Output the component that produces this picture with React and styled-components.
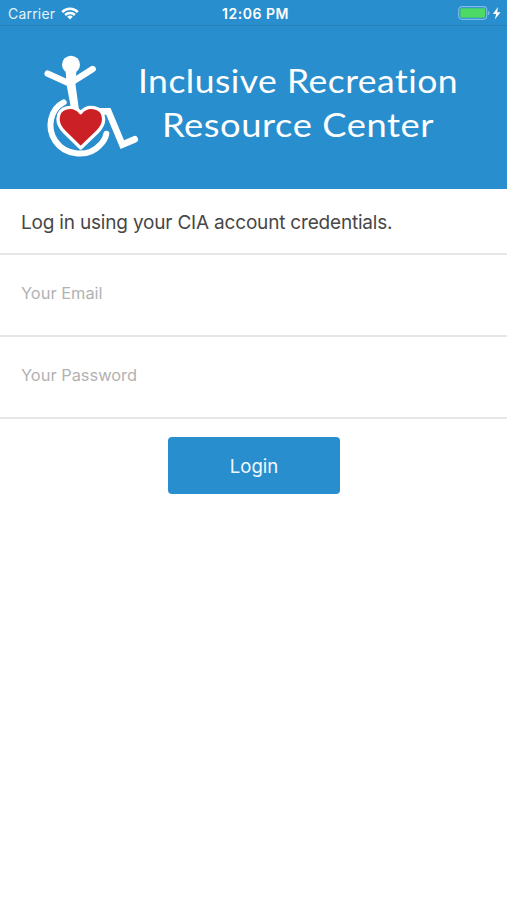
import styled, { createGlobalStyle } from "styled-components";

const GlobalStyle = createGlobalStyle`
  * {
    box-sizing: border-box;
  }

  body {
    margin: 0;
    background-color: #fff;
    font-family: Inter, "Liberation Sans", sans-serif;
  }
`;

const Screen = styled.main`
  min-height: 900px;
  background-color: #fff;
`;

const StatusBar = styled.div`
  display: grid;
  grid-template-columns: 1fr auto 1fr;
  align-items: center;
  height: 26px;
  padding: 1px 5px 0 8px;
  background-color: #298ecd;
  border-bottom: 1px solid #2580ba;
  color: #fff;
  line-height: 24px;
`;

const Carrier = styled.div`
  display: flex;
  align-items: center;
  gap: 6px;
  padding-top: 1px;
  color: #e3f3fc;
  font-size: 14px;
  letter-spacing: 0.2px;

  svg {
    margin-bottom: 1px;
  }
`;

const Time = styled.div`
  padding: 1px 0 0 1px;
  font-size: 14px;
  font-weight: 600;
  letter-spacing: 0.5px;
`;

const Power = styled.div`
  display: flex;
  justify-content: flex-end;
  padding-bottom: 1px;
`;

const Header = styled.header`
  display: flex;
  align-items: flex-start;
  height: 163px;
  padding: 19px 0 0 30px;
  background-color: #298ecd;
`;

const Title = styled.h1`
  width: 336px;
  margin: 13px 0 0 -20px;
  color: #fff;
  font-family: Lato, "Open Sans", sans-serif;
  font-size: 33.5px;
  font-weight: 400;
  line-height: 44px;
  text-align: center;
`;

const TitleLine = styled.span`
  display: block;
  white-space: nowrap;
  letter-spacing: ${(props) => props.$spacing};
  transform: scaleX(${(props) => props.$stretch});
`;

const Intro = styled.p`
  height: 66px;
  margin: 0;
  padding: 1px 21px 0;
  border-bottom: 2px solid #e6e6e6;
  color: #474747;
  font-size: 19px;
  line-height: 66px;
  letter-spacing: -0.19px;
`;

const Input = styled.input`
  display: block;
  width: 100%;
  height: 82px;
  padding: 0 21px 5px;
  border: none;
  border-bottom: 2px solid #e6e6e6;
  border-radius: 0;
  outline: none;
  background-color: #fff;
  color: #474747;
  font-family: inherit;
  font-size: 16.4px;

  &::placeholder {
    color: #b2b2b2;
    opacity: 1;
  }
`;

const Button = styled.button`
  display: block;
  width: 172px;
  height: 57px;
  margin: 18px auto 0 168px;
  padding: 0;
  border: none;
  border-radius: 4px;
  background-color: #298ecd;
  color: #f0f9fe;
  font-family: inherit;
  font-size: 18.6px;
`;

function WifiIcon() {
  return (
    <svg width="18" height="13" viewBox="0 0 18 13" fill="none" stroke="#fff" strokeWidth="2.5">
      <path d="M1.2 5.1A11 11 0 0 1 16.8 5.1" />
      <path d="M4.1 8A7 7 0 0 1 13.9 8" />
      <path d="M9 12.6 6.2 9.8A4 4 0 0 1 11.8 9.8Z" fill="#fff" stroke="none" />
    </svg>
  );
}

function BatteryIcon() {
  return (
    <svg width="46" height="16" viewBox="0 0 46 16">
      <rect x="2.7" y="1.7" width="28" height="12.6" rx="3.2" fill="none" stroke="#7fbce3" strokeWidth="1.2" />
      <rect x="4.3" y="3.3" width="24.8" height="9.4" rx="1.4" fill="#4cd964" />
      <path d="M32 5.8Q33.6 6.4 33.6 8T32 10.2Z" fill="#7fbce3" />
      <path d="M42 2 36.8 9H40.2L38.8 14.4 44.6 7.2H41.2Z" fill="#fff" />
    </svg>
  );
}

// Figure in a heart shaped wheelchair
function Logo() {
  return (
    <svg width="120" height="120" viewBox="0 0 360 360" fill="none" stroke="#fff" strokeLinecap="round">
      <circle cx="123" cy="59" r="27" fill="#fff" stroke="none" />
      <path d="M53 86 119 116 188 72" strokeWidth="19" strokeLinejoin="round" />
      <path d="M107 80H139L136 115 147 195H124L110 121Z" fill="#fff" stroke="none" />
      <path d="M101 172C61 192 49 248 76 288C107 334 176 338 210 300Q226 284 229 266" strokeWidth="18" />
      <path d="M204 199H235L277 299 314 283" strokeWidth="20" />
      <path
        d="M152 309L103 261Q84 242 84 222C84 186 129 176 152 203C175 176 221 186 221 222Q221 242 202 261Z"
        fill="#cb2026"
        strokeWidth="10"
        strokeLinejoin="round"
      />
    </svg>
  );
}

export default function App() {
  return (
    <>
      <GlobalStyle />
      <Screen>
        <StatusBar>
          <Carrier>
            Carrier
            <WifiIcon />
          </Carrier>
          <Time>12:06 PM</Time>
          <Power>
            <BatteryIcon />
          </Power>
        </StatusBar>
        <Header>
          <Logo />
          <Title>
            <TitleLine $spacing="0.45px" $stretch={1.06}>Inclusive Recreation</TitleLine>
            <TitleLine $spacing="0.5px" $stretch={1.085}>Resource Center</TitleLine>
          </Title>
        </Header>
        <Intro>Log in using your CIA account credentials.</Intro>
        <form onSubmit={(e) => e.preventDefault()}>
          <Input type="email" placeholder="Your Email" />
          <Input type="password" placeholder="Your Password" />
          <Button>Login</Button>
        </form>
      </Screen>
    </>
  );
}
